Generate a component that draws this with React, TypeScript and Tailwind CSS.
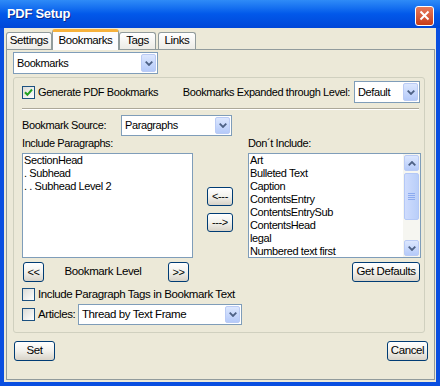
import React from 'react';

function Chevron({ up = false }: { up?: boolean }) {
  return (
    <svg width="8" height="5" viewBox="0 0 8 5">
      <path
        d={up ? 'M0.7 4.3 L4 1 L7.3 4.3' : 'M0.7 0.7 L4 4 L7.3 0.7'}
        fill="none"
        stroke="#4D6185"
        strokeWidth="1.8"
      />
    </svg>
  );
}

function ArrowBtn({ up = false, className = '' }: { up?: boolean; className?: string }) {
  return (
    <div
      className={`flex items-center justify-center rounded-[2px] border border-[#BACBF5] bg-linear-to-b from-[#DCE7FE] to-[#B5CAF9] ${className}`}
    >
      <Chevron up={up} />
    </div>
  );
}

function Combo({ text, className }: { text: string; className: string }) {
  return (
    <div className={`flex items-stretch border border-[#7F9DB9] bg-white ${className}`}>
      <span className="flex flex-1 items-center pl-[3px] whitespace-nowrap overflow-hidden">{text}</span>
      <ArrowBtn className="w-[15px] my-[1px] mr-[1px]" />
    </div>
  );
}

function Check({ checked = false }: { checked?: boolean }) {
  return (
    <div className="flex w-[13px] h-[13px] shrink-0 items-center justify-center border border-[#1C5180] bg-linear-to-br from-[#DCDCD7] to-white">
      {checked && (
        <svg width="9" height="9" viewBox="0 0 9 9">
          <path d="M1 4.2 L3.4 6.8 L8 1.5" fill="none" stroke="#21A121" strokeWidth="2" />
        </svg>
      )}
    </div>
  );
}

function Btn({ children, className }: { children: React.ReactNode; className: string }) {
  return (
    <div
      className={`flex items-center justify-center rounded-[3px] border border-[#003C74] bg-linear-to-b from-white via-[#F2F1EC] to-[#D8D3C8] whitespace-nowrap ${className}`}
    >
      {children}
    </div>
  );
}

const included = ['SectionHead', '. Subhead', '. . Subhead Level 2'];
const excluded = [
  'Art',
  'Bulleted Text',
  'Caption',
  'ContentsEntry',
  'ContentsEntrySub',
  'ContentsHead',
  'legal',
  'Numbered text first',
];

export default function App() {
  return (
    <div className="w-[440px] h-[386px] flex flex-col bg-[#0A4FE0] text-black text-[11px] tracking-[-0.4px] font-['Liberation_Sans',Arial,sans-serif] select-none">
      {/* Title bar */}
      <div className="h-[28px] flex items-center bg-linear-to-b from-[#2F8BF7] via-[#0258EA] to-[#0047D8]">
        <span className="pl-[7px] text-[13px] font-bold tracking-[-0.3px] text-white [text-shadow:1px_1px_0_#0B2A8F]">
          PDF Setup
        </span>
        <div className="ml-auto mr-[6px] mt-[3px] flex w-[19px] h-[20px] items-center justify-center rounded-[3px] border border-white bg-linear-to-b from-[#E8795A] to-[#C73C17]">
          <svg width="11" height="11" viewBox="0 0 11 11">
            <path d="M1.5 1.5 L9.5 9.5 M9.5 1.5 L1.5 9.5" stroke="white" strokeWidth="2" />
          </svg>
        </div>
      </div>

      {/* Client area */}
      <div className="flex-1 mx-[4px] mb-[4px] bg-[#ECE9D8] flex flex-col">
        {/* Tabs */}
        <div className="flex items-end h-[21px] pl-[2px] text-[11.5px]">
          <div className="w-[46px] h-[17px] flex items-center justify-center rounded-t-[3px] border border-b-0 border-[#919B9C] bg-linear-to-b from-white to-[#ECEBE6]">
            Settings
          </div>
          <div className="relative z-10 w-[67px] h-[21px] -mb-[1px] flex items-center justify-center rounded-t-[3px] border-x border-[#919B9C] border-t-[3px] border-t-[#F7B23C] bg-[#FCFCFE]">
            Bookmarks
          </div>
          <div className="w-[37px] h-[17px] flex items-center justify-center rounded-t-[3px] border border-b-0 border-[#919B9C] bg-linear-to-b from-white to-[#ECEBE6]">
            Tags
          </div>
          <div className="ml-[2px] w-[38px] h-[17px] flex items-center justify-center rounded-t-[3px] border border-b-0 border-[#919B9C] bg-linear-to-b from-white to-[#ECEBE6]">
            Links
          </div>
        </div>

        {/* Tab panel */}
        <div className="ml-[2px] w-[429px] h-[331px] border border-[#919B9C] flex flex-col px-[6px]">
          <Combo text="Bookmarks" className="mt-[2px] w-[145px] h-[22px]" />

          {/* Group box */}
          <div className="mt-[3px] w-[412px] border border-[#D0D0BF] rounded-[3px] flex flex-col pl-[8px] pb-[7px]">
            <div className="mt-[3px] h-[22px] flex items-center">
              <Check checked />
              <span className="ml-[3px]">Generate PDF Bookmarks</span>
              <span className="ml-auto mr-[4px]">Bookmarks Expanded through Level:</span>
              <Combo text="Default" className="w-[66px] h-[22px] mr-[4px]" />
            </div>

            <div className="mt-[5px] mr-[5px] h-[2px] border-t border-[#ACA899] border-b border-b-white" />

            <div className="mt-[5px] h-[21px] flex items-center">
              <span className="w-[99px]">Bookmark Source:</span>
              <Combo text="Paragraphs" className="w-[111px] h-[21px]" />
            </div>

            {/* Lists */}
            <div className="mt-[1px] flex">
              <div className="w-[171px] flex flex-col">
                <span className="h-[13px] leading-[13px]">Include Paragraphs:</span>
                <div className="mt-[3px] h-[105px] border border-[#7F9DB9] bg-white pl-[1px] leading-[13px] whitespace-pre">
                  {included.map((t) => (
                    <div key={t}>{t}</div>
                  ))}
                </div>
              </div>

              <div className="ml-[14px] w-[26px] flex flex-col pt-[50px] gap-[7px]">
                <Btn className="h-[19px]">&lt;---</Btn>
                <Btn className="h-[19px]">---&gt;</Btn>
              </div>

              <div className="ml-[15px] w-[173px] flex flex-col">
                <span className="h-[13px] leading-[13px]">Don´t Include:</span>
                <div className="mt-[3px] h-[105px] border border-[#7F9DB9] bg-white flex">
                  <div className="flex-1 pl-[1px] leading-[13px] overflow-hidden">
                    {excluded.map((t) => (
                      <div key={t}>{t}</div>
                    ))}
                  </div>
                  <div className="w-[17px] bg-[#F6F6F1] flex flex-col p-[1px]">
                    <ArrowBtn up className="h-[16px]" />
                    <div className="mt-[2px] h-[47px] flex flex-col items-center justify-center gap-[1px] rounded-[2px] border border-[#B4C8F6] bg-linear-to-r from-[#CFDCFD] to-[#B9CEF9]">
                      <div className="w-[7px] h-[1px] bg-[#8DABEF]" />
                      <div className="w-[7px] h-[1px] bg-[#8DABEF]" />
                      <div className="w-[7px] h-[1px] bg-[#8DABEF]" />
                      <div className="w-[7px] h-[1px] bg-[#8DABEF]" />
                    </div>
                    <ArrowBtn className="mt-auto h-[16px]" />
                  </div>
                </div>
              </div>
            </div>

            {/* Level row */}
            <div className="mt-[4px] h-[20px] flex items-center">
              <Btn className="ml-[1px] w-[21px] h-[20px]">&lt;&lt;</Btn>
              <span className="w-[124px] flex justify-center pr-[6px] text-[11.5px]">Bookmark Level</span>
              <Btn className="w-[21px] h-[20px]">&gt;&gt;</Btn>
              <Btn className="ml-auto mr-[4px] w-[68px] h-[20px] text-[11.5px]">Get Defaults</Btn>
            </div>

            <div className="mt-[6px] h-[13px] flex items-center">
              <Check />
              <span className="ml-[3px] text-[11.5px]">Include Paragraph Tags in Bookmark Text</span>
            </div>

            <div className="mt-[3px] h-[21px] flex items-center">
              <Check />
              <span className="ml-[3px] w-[40px] text-[11.5px]">Articles:</span>
              <Combo text="Thread by Text Frame" className="w-[164px] h-[21px] text-[11.5px]" />
            </div>
          </div>

          {/* Set / Cancel */}
          <div className="mt-[8px] flex text-[11.5px]">
            <Btn className="ml-[1px] w-[41px] h-[20px]">Set</Btn>
            <Btn className="ml-auto w-[41px] h-[20px]">Cancel</Btn>
          </div>
        </div>
      </div>
    </div>
  );
}
